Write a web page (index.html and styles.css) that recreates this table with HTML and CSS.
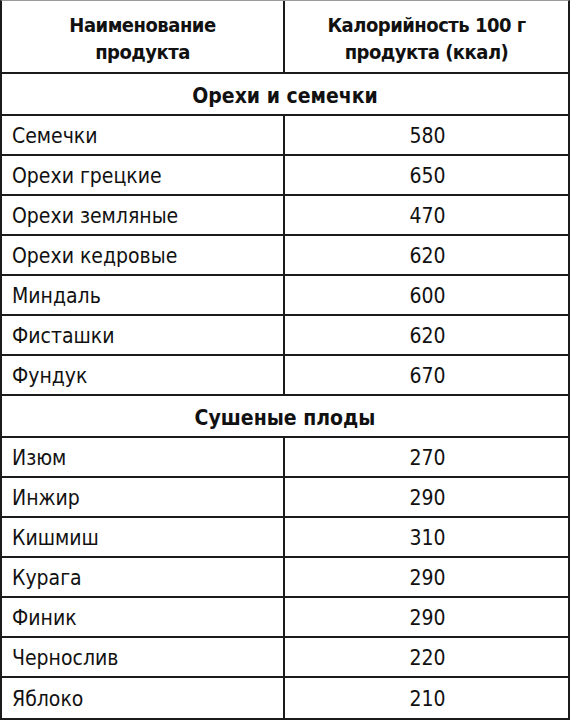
FILE: index.html
```html
<!DOCTYPE html>
<html lang="ru">
<head>
<meta charset="utf-8">
<link rel="stylesheet" href="styles.css">
</head>
<body>
<div class="table">
  <div class="row head">
    <div class="cell">Наименование<br>продукта</div>
    <div class="cell">Калорийность 100 г<br>продукта (ккал)</div>
  </div>
  <div class="row section"><div class="cell">Орехи и семечки</div></div>
  <div class="row"><div class="cell name">Семечки</div><div class="cell num">580</div></div>
  <div class="row"><div class="cell name">Орехи грецкие</div><div class="cell num">650</div></div>
  <div class="row"><div class="cell name">Орехи земляные</div><div class="cell num">470</div></div>
  <div class="row"><div class="cell name">Орехи кедровые</div><div class="cell num">620</div></div>
  <div class="row"><div class="cell name">Миндаль</div><div class="cell num">600</div></div>
  <div class="row"><div class="cell name">Фисташки</div><div class="cell num">620</div></div>
  <div class="row"><div class="cell name">Фундук</div><div class="cell num">670</div></div>
  <div class="row section"><div class="cell">Сушеные плоды</div></div>
  <div class="row"><div class="cell name">Изюм</div><div class="cell num">270</div></div>
  <div class="row"><div class="cell name">Инжир</div><div class="cell num">290</div></div>
  <div class="row"><div class="cell name">Кишмиш</div><div class="cell num">310</div></div>
  <div class="row"><div class="cell name">Курага</div><div class="cell num">290</div></div>
  <div class="row"><div class="cell name">Финик</div><div class="cell num">290</div></div>
  <div class="row"><div class="cell name">Чернослив</div><div class="cell num">220</div></div>
  <div class="row"><div class="cell name">Яблоко</div><div class="cell num">210</div></div>
</div>
</body>
</html>
```
FILE: styles.css
```css
html, body {
  margin: 0;
  padding: 0;
  background: #fff;
}
body {
  font-family: "Liberation Sans Narrow", "DejaVu Sans Condensed", "Liberation Sans", sans-serif;
  color: #111;
}
.table {
  width: 570px;
  box-sizing: border-box;
  border-left: 2px solid #1b1b1b;
  border-right: 2px solid #1b1b1b;
  border-top: 1px solid #9a9a9a;
  border-bottom: 2px solid #1b1b1b;
  box-shadow: 0 1px 0 #9a9a9a;
}
.row {
  display: grid;
  grid-template-columns: 283px 1fr;
  height: 40px;
  box-sizing: border-box;
  border-bottom: 2px solid #1b1b1b;
  font-size: 21px;
}
.row:last-child {
  border-bottom: none;
}
.cell {
  display: flex;
  align-items: center;
  padding-top: 2px;
  box-sizing: border-box;
}
.row > .cell:first-child {
  border-right: 2px solid #1b1b1b;
}
.name {
  padding-left: 10px;
}
.num {
  justify-content: center;
  padding-left: 2px;
}
.head {
  height: 73px;
  font-weight: bold;
  font-size: 20px;
  letter-spacing: -0.5px;
  line-height: 27px;
}
.head .cell {
  justify-content: center;
  text-align: center;
  padding-top: 5px;
}
.section {
  grid-template-columns: 1fr;
  height: 42px;
  font-weight: bold;
}
.row.section > .cell:first-child {
  border-right: none;
  justify-content: center;
  padding-top: 4px;
}
```
